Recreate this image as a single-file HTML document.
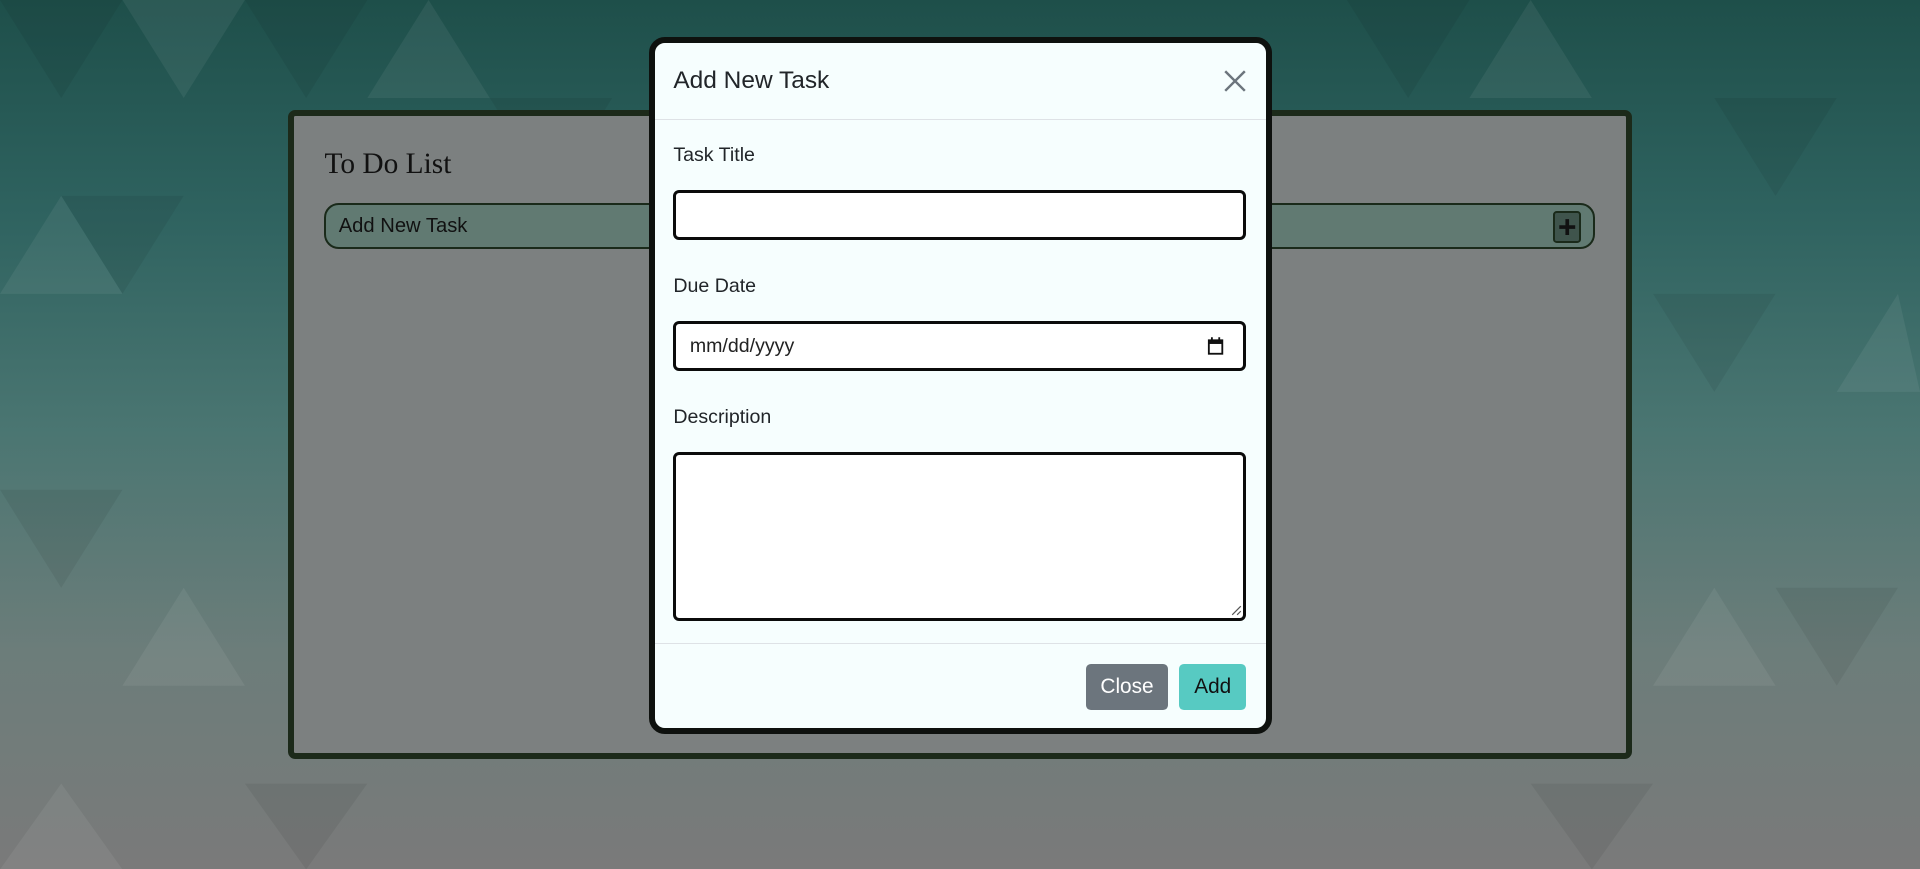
<!DOCTYPE html>
<html><head><meta charset="utf-8"><style>
html,body{margin:0;padding:0;width:1920px;height:869px;overflow:hidden}
#w{zoom:1.2245;position:relative;width:1568px;height:710px;overflow:hidden;font-family:"Liberation Sans",Arial,sans-serif;
background:linear-gradient(180deg,#1e4f4a 0%,#2f6360 25%,#4b7672 50%,#6c7d7a 75%,#7a7a7a 100%)}
.ab{position:absolute}
.card{left:235px;top:90px;width:1088px;height:520px;border:5px solid #1c2a1a;border-radius:6px;background:#7c8080}
.h{left:265px;top:121px;font-family:"Liberation Serif",serif;font-size:24px;color:#111}
.row{left:265px;top:166px;width:1034px;height:34px;border:2px solid #1a2a1a;border-radius:12px;background:#617a72}
.row span{position:absolute;left:10px;top:8px;font-size:16.5px;color:#111}
.plus{left:1268px;top:172px;width:20px;height:23px;border:2px solid #1a2a1a;border-radius:3px;background:#3f544c}
.modal{left:530px;top:30px;width:499px;height:560px;border:5px solid #0e110e;border-radius:13px;background:#f6fefe;overflow:hidden}
.t{left:15px;top:20px;font-size:20px;color:#212529}
.x{left:465px;top:22px}
.hr{left:0;width:499px;height:1px;background:#dee2e6}
.lab{left:15px;font-size:16px;color:#212529}
.inp{left:15px;width:463px;border:3px solid #0b0b0b;border-radius:5px;background:#fff}
.btn{top:507px;height:38px;border-radius:4px;font-size:17px;line-height:38px;text-align:center}
</style></head><body><div id="w">
<svg class="ab" style="left:0;top:0" width="1568" height="710" opacity="0.06">
<g fill="#000">
<polygon points="0,0 50,80 100,0"/><polygon points="200,0 250,80 300,0"/><polygon points="400,80 450,160 500,80"/><polygon points="1100,0 1150,80 1200,0"/><polygon points="1400,80 1450,160 1500,80"/><polygon points="50,160 100,240 150,160"/><polygon points="1350,240 1400,320 1450,240"/><polygon points="0,400 50,480 100,400"/><polygon points="1450,480 1500,560 1550,480"/><polygon points="200,640 250,710 300,640"/><polygon points="1250,640 1300,710 1350,640"/>
</g><g fill="#fff">
<polygon points="100,0 150,80 200,0"/><polygon points="300,80 350,0 400,80"/><polygon points="1200,80 1250,0 1300,80"/><polygon points="0,240 50,160 100,240"/><polygon points="1500,320 1550,240 1568,320"/><polygon points="100,560 150,480 200,560"/><polygon points="1350,560 1400,480 1450,560"/><polygon points="0,710 50,640 100,710"/>
</g></svg>
<div class="ab card"></div>
<div class="ab h">To Do List</div>
<div class="ab row"><span>Add New Task</span></div>
<div class="ab plus"><svg width="20" height="23"><path d="M10 5v13M3.5 11.5h13" stroke="#111" stroke-width="3"/></svg></div>
<div class="ab modal">
 <div class="ab t">Add New Task</div>
 <svg class="ab x" width="18" height="18"><path d="M1 1L17 17M17 1L1 17" stroke="#6c757d" stroke-width="2"/></svg>
 <div class="ab hr" style="top:62px"></div>
 <div class="ab lab" style="top:83px">Task Title</div>
 <div class="ab inp" style="top:120px;height:36px"></div>
 <div class="ab lab" style="top:190px">Due Date</div>
 <div class="ab inp" style="top:227px;height:36px"><span style="position:absolute;left:11px;top:9px;font-size:16px;color:#222">mm/dd/yyyy</span>
 <svg style="position:absolute;left:433px;top:10px" width="14" height="16"><rect x="1.5" y="3.5" width="11" height="11" fill="none" stroke="#111" stroke-width="1.5"/><rect x="1.5" y="3.5" width="11" height="3" fill="#111"/><path d="M4 1v3M10 1v3" stroke="#111" stroke-width="1.5"/></svg></div>
 <div class="ab lab" style="top:297px">Description</div>
 <div class="ab inp" style="top:334px;height:133px"><svg style="position:absolute;right:1px;bottom:1px" width="9" height="9"><path d="M8 1L1 8M8 5L5 8" stroke="#555" stroke-width="1"/></svg></div>
 <div class="ab hr" style="top:490px"></div>
 <div class="ab btn" style="left:352px;width:67px;background:#6c757d;color:#fff">Close</div>
 <div class="ab btn" style="left:428px;width:55px;background:#57cac2;color:#111">Add</div>
</div>
</div></body></html>
